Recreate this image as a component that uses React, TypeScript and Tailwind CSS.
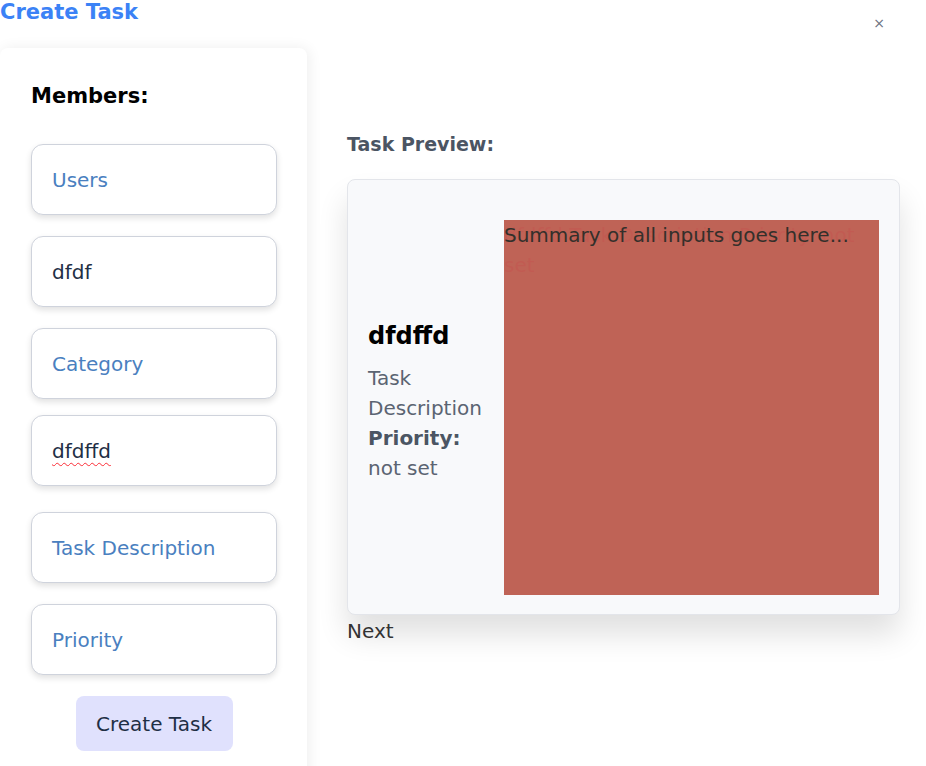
import React from "react";

const font = { fontFamily: '"DejaVu Sans", "Open Sans", Arial, sans-serif' };

function Field({ label, value, cls }: { label?: string; value?: string; cls?: string }) {
  return (
    <div
      className={`h-[71px] w-[246px] rounded-xl border border-[#cfd3dc] bg-white shadow-[0_3px_6px_rgba(0,0,0,0.12)] flex items-center px-5 text-[20px] ${cls ?? ""}`}
    >
      {label ? (
        <span className="text-[#4a80bf]">{label}</span>
      ) : (
        <span className="text-[#1f2f45]">{value}</span>
      )}
    </div>
  );
}

export default function App() {
  return (
    <div className="relative w-[926px] h-[766px] overflow-hidden bg-white" style={font}>
      <div className="h-[48px] flex items-start justify-between">
        <h1 className="text-[21px] leading-[24px] font-bold text-[#3b82f6]">Create Task</h1>
        <button className="mt-[16px] mr-[41px] text-[14px] text-gray-500 leading-none">×</button>
      </div>
      <div className="flex">
        <div className="w-[307px] h-[760px] bg-white shadow-[2px_0_14px_rgba(0,0,0,0.07)] rounded-t-lg pl-[31px] pt-[36px] flex flex-col">
          <h2 className="text-[21px] leading-[24px] font-bold text-black">Members:</h2>
          <div className="mt-[36px] flex flex-col">
            <Field label="Users" />
            <Field value="dfdf" cls="mt-[21px]" />
            <Field label="Category" cls="mt-[21px]" />
            <div className="mt-[16px] h-[71px] w-[246px] rounded-xl border border-[#cfd3dc] bg-white shadow-[0_3px_6px_rgba(0,0,0,0.12)] flex items-center px-5 text-[20px]">
              <span className="text-[#1f2f45] underline decoration-wavy decoration-red-500 decoration-1 underline-offset-4">dfdffd</span>
            </div>
            <Field label="Task Description" cls="mt-[26px]" />
            <Field label="Priority" cls="mt-[21px]" />
            <div className="w-[246px] flex justify-center mt-[21px]">
              <button className="h-[55px] w-[157px] rounded-lg bg-[#e0e1fd] text-[20px] text-[#1f2f45]">Create Task</button>
            </div>
          </div>
        </div>
        <div className="flex-1 pl-[40px] pr-[26px] pt-[84px]">
          <h3 className="text-[19px] leading-[24px] font-bold text-[#4b5563]">Task Preview:</h3>
          <div className="mt-[23px] w-[553px] h-[436px] rounded-lg border border-[#e3e5ea] bg-[#f8f9fb] shadow-[0_20px_30px_rgba(0,0,0,0.12)] px-5 pb-5 pt-[40px] flex">
            <div className="w-[116px] flex flex-col justify-center pb-[10px]">
              <div className="text-[24px] font-bold text-black leading-[30px]">dfdffd</div>
              <div className="mt-[12px] text-[20px] leading-[30px] text-[#5b6472]">Task Description</div>
              <div className="text-[20px] leading-[30px] font-bold text-[#4b5563]">Priority:</div>
              <div className="text-[20px] leading-[30px] text-[#5b6472]">not set</div>
            </div>
            <div className="ml-[20px] relative w-[375px] h-[375px] bg-[#bf6356]">
              <div className="absolute left-0 top-0 w-[360px] text-[20px] leading-[30px] text-[#c94a4a]/30">
                dfdffd Task Description Priority: not set
              </div>
              <div className="relative text-[20px] leading-[30px] text-[#33302b]">Summary of all inputs goes here...</div>
            </div>
          </div>
          <div className="mt-[2px] text-[20px] leading-[28px] text-[#333]">Next</div>
        </div>
      </div>
    </div>
  );
}
